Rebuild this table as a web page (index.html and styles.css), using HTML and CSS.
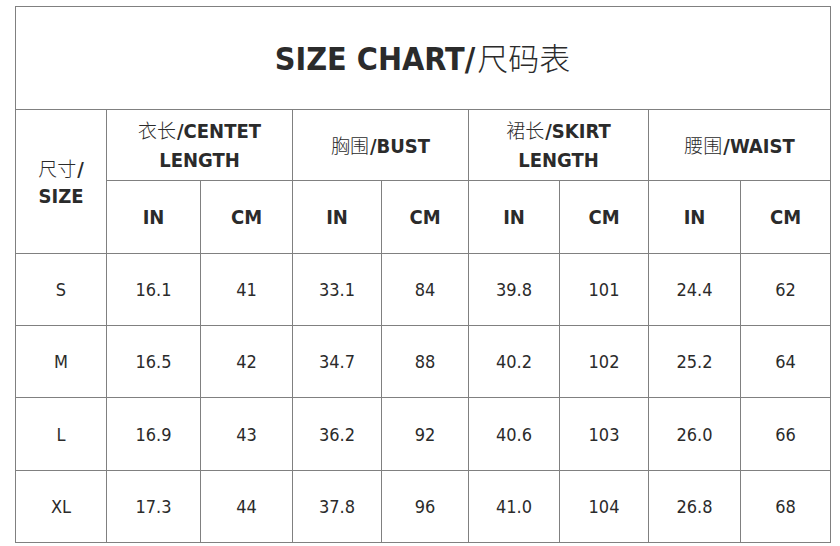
FILE: index.html
```html
<!DOCTYPE html>
<html lang="zh">
<head>
<meta charset="utf-8">
<title>Size Chart</title>
<link rel="stylesheet" href="styles.css">
</head>
<body>
<div class="page">
  <div class="chart">
    <div class="cell title"><div>SIZE CHART/<span class="cn">尺码表</span></div></div>

    <div class="cell head size-head"><div><span class="cn">尺寸</span>/<br>SIZE</div></div>
    <div class="cell head group"><div><span class="cn">衣长</span>/CENTET<br>LENGTH</div></div>
    <div class="cell head group"><div><span class="cn">胸围</span>/BUST</div></div>
    <div class="cell head group"><div><span class="cn">裙长</span>/SKIRT<br>LENGTH</div></div>
    <div class="cell head group"><div><span class="cn">腰围</span>/WAIST</div></div>

    <div class="cell head">IN</div><div class="cell head">CM</div>
    <div class="cell head">IN</div><div class="cell head">CM</div>
    <div class="cell head">IN</div><div class="cell head">CM</div>
    <div class="cell head">IN</div><div class="cell head">CM</div>

    <div class="cell">S</div><div class="cell">16.1</div><div class="cell">41</div><div class="cell">33.1</div><div class="cell">84</div><div class="cell">39.8</div><div class="cell">101</div><div class="cell">24.4</div><div class="cell">62</div>
    <div class="cell">M</div><div class="cell">16.5</div><div class="cell">42</div><div class="cell">34.7</div><div class="cell">88</div><div class="cell">40.2</div><div class="cell">102</div><div class="cell">25.2</div><div class="cell">64</div>
    <div class="cell">L</div><div class="cell">16.9</div><div class="cell">43</div><div class="cell">36.2</div><div class="cell">92</div><div class="cell">40.6</div><div class="cell">103</div><div class="cell">26.0</div><div class="cell">66</div>
    <div class="cell">XL</div><div class="cell">17.3</div><div class="cell">44</div><div class="cell">37.8</div><div class="cell">96</div><div class="cell">41.0</div><div class="cell">104</div><div class="cell">26.8</div><div class="cell">68</div>
  </div>
</div>
</body>
</html>
```

FILE: styles.css
```css
html, body {
  margin: 0;
  padding: 0;
  background: #ffffff;
}

.page {
  padding: 6px 0 0 15px;
}

.chart {
  display: grid;
  width: 816px;
  box-sizing: border-box;
  grid-template-columns: 90px 93px 91px 88px 86px 90px 88px 91px 89px;
  grid-template-rows: 102px 70px 72px 71px 71px 72px 71px;
  gap: 1px;
  padding: 1px;
  background: #808080;
  font-family: "DejaVu Sans Condensed", "DejaVu Sans", "Noto Sans CJK SC", sans-serif;
  font-stretch: condensed;
  color: #2b2b2b;
}

.cell {
  background: #ffffff;
  display: flex;
  align-items: center;
  justify-content: center;
  text-align: center;
  font-size: 18px;
}

.cn {
  font-family: "Noto Sans CJK SC", sans-serif;
  font-weight: 300;
  font-stretch: normal;
  margin-right: 1px;
}

.title {
  grid-column: 1 / -1;
  font-size: 32px;
  font-weight: bold;
  padding-bottom: 4px;
}

.title .cn {
  font-size: 31px;
  font-weight: 300;
  margin-left: 2px;
}

.head {
  font-size: 20px;
  font-weight: bold;
  line-height: 29px;
}

.head .cn {
  font-size: 19px;
}

.size-head {
  grid-row: span 2;
  line-height: 27px;
}

.group {
  grid-column: span 2;
}
```
